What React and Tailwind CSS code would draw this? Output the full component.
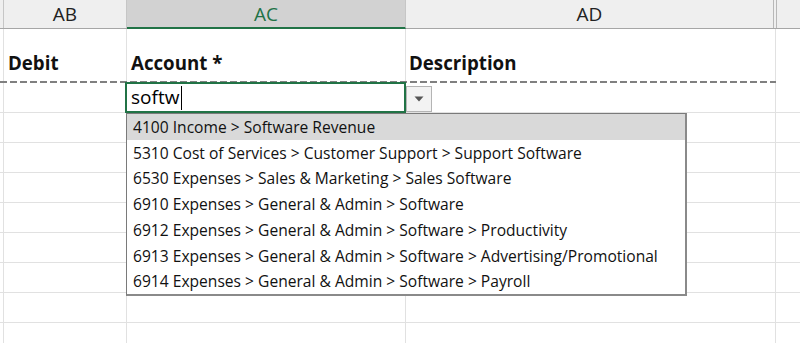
import React from "react";

const items = [
  "4100 Income > Software Revenue",
  "5310 Cost of Services > Customer Support > Support Software",
  "6530 Expenses > Sales & Marketing > Sales Software",
  "6910 Expenses > General & Admin > Software",
  "6912 Expenses > General & Admin > Software > Productivity",
  "6913 Expenses > General & Admin > Software > Advertising/Promotional",
  "6914 Expenses > General & Admin > Software > Payroll",
];

function Row({ children }) {
  return (
    <div className="flex h-[30px] border-b border-[#e1e1e1]">
      <div className="w-[4px] border-r border-[#e1e1e1]" />
      <div className="w-[123px] border-r border-[#e1e1e1]" />
      <div className="w-[279px] border-r border-[#e1e1e1]">{children}</div>
      <div className="w-[370px] border-r border-[#e1e1e1]" />
      <div className="flex-1" />
    </div>
  );
}

export default function App() {
  return (
    <div className="relative w-[800px] h-[343px] overflow-hidden bg-white font-['Segoe_UI','Open_Sans',sans-serif] text-black">
      {/* Column headers */}
      <div className="flex h-[29px] bg-[#efefef] border-b border-[#a6a6a6] text-[19px] text-[#222]">
        <div className="w-[4px] border-r border-[#c6c6c6]" />
        <div className="w-[123px] border-r border-[#c6c6c6] flex items-center justify-center pt-px">AB</div>
        <div className="w-[279px] border-r border-[#c6c6c6] bg-[#d2d2d2] border-b-2 border-b-[#217346] -mb-px flex items-center justify-center pt-px text-[#217346]">AC</div>
        <div className="w-[368px] border-r border-[#b8b8b8] flex items-center justify-center pt-px">AD</div>
        <div className="w-[3px] border-r border-[#b8b8b8]" />
        <div className="flex-1" />
      </div>

      {/* Row 1: titles */}
      <div className="flex h-[52px] text-[18.7px] font-bold text-[#111]">
        <div className="w-[4px] border-r border-[#e1e1e1]" />
        <div className="w-[123px] border-r border-[#e1e1e1] flex items-end pl-[4px] pb-[4px]">Debit</div>
        <div className="w-[279px] border-r border-[#e1e1e1] flex items-end pl-[4px] pb-[4px]">Account *</div>
        <div className="w-[370px] border-r border-[#e1e1e1] flex items-end pl-[3px] pb-[4px]">Description</div>
        <div className="flex-1" />
      </div>

      {/* Page break dashed line */}
      <div className="flex h-[2px]">
        <div className="w-[776px] bg-[repeating-linear-gradient(90deg,#808080_0_7px,transparent_7px_10px)]" />
        <div className="flex-1" />
      </div>

      {/* Row 2: editing cell */}
      <Row>
        <div className="flex items-center h-full pl-[4px] text-[19px] leading-none">
          <span>softw</span>
          <span className="ml-[2px] w-px h-[24px] bg-black" />
        </div>
      </Row>
      <Row />
      <Row />
      <Row />
      <Row />
      <Row />
      <Row />
      <Row />
      <Row />

      {/* Active cell border */}
      <div className="absolute left-[125px] top-[82px] w-[281px] h-[31px] border-2 border-[#217346] pointer-events-none" />

      {/* Dropdown arrow button */}
      <div className="absolute left-[406px] top-[86px] w-[26px] h-[26px] bg-[#f3f3f3] border border-[#b4b4b4] flex items-center justify-center">
        <svg width="10" height="6" viewBox="0 0 10 6">
          <path d="M0.5 0.5 L9.5 0.5 L5 5.5 Z" fill="#555" />
        </svg>
      </div>

      {/* Dropdown list */}
      <div className="absolute left-[126px] top-[113px] w-[561px] h-[183px] bg-white border border-[#7a7a7a] border-r-2 border-b-2 border-r-[#8a8a8a] border-b-[#8a8a8a] text-[15.6px] text-[#111]">
        {items.map((t, i) => (
          <div
            key={i}
            className={
              "h-[25.8px] flex items-center pl-[6px] pt-px whitespace-nowrap " +
              (i === 0 ? "bg-[#d9d9d9]" : "")
            }
          >
            {t}
          </div>
        ))}
      </div>
    </div>
  );
}
